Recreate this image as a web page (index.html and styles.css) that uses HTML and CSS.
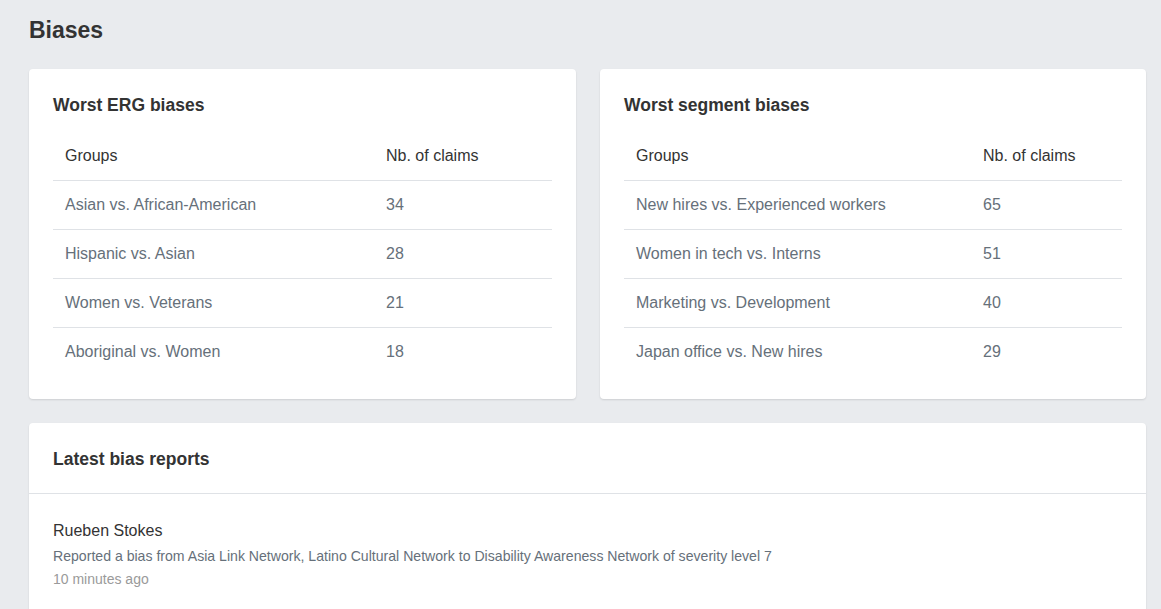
FILE: index.html
```html
<!DOCTYPE html>
<html lang="en">
<head>
<meta charset="utf-8">
<title>Biases</title>
<link rel="stylesheet" href="styles.css">
</head>
<body>
<main class="page">
  <h1 class="page-title">Biases</h1>
  <div class="grid">
    <section class="card card-pad">
      <h2 class="card-title">Worst ERG biases</h2>
      <table class="table">
        <thead>
          <tr><th class="col-erg">Groups</th><th>Nb. of claims</th></tr>
        </thead>
        <tbody>
          <tr><td>Asian vs. African-American</td><td>34</td></tr>
          <tr><td>Hispanic vs. Asian</td><td>28</td></tr>
          <tr><td>Women vs. Veterans</td><td>21</td></tr>
          <tr><td>Aboriginal vs. Women</td><td>18</td></tr>
        </tbody>
      </table>
    </section>
    <section class="card card-pad">
      <h2 class="card-title">Worst segment biases</h2>
      <table class="table">
        <thead>
          <tr><th class="col-seg">Groups</th><th>Nb. of claims</th></tr>
        </thead>
        <tbody>
          <tr><td>New hires vs. Experienced workers</td><td>65</td></tr>
          <tr><td>Women in tech vs. Interns</td><td>51</td></tr>
          <tr><td>Marketing vs. Development</td><td>40</td></tr>
          <tr><td>Japan office vs. New hires</td><td>29</td></tr>
        </tbody>
      </table>
    </section>
  </div>
  <section class="card reports">
    <header class="card-header">
      <h2 class="card-title flush">Latest bias reports</h2>
    </header>
    <div class="card-body">
      <div class="report-name">Rueben Stokes</div>
      <div class="report-desc">Reported a bias from Asia Link Network, Latino Cultural Network to Disability Awareness Network of severity level 7</div>
      <div class="report-time">10 minutes ago</div>
    </div>
  </section>
</main>
</body>
</html>
```

FILE: styles.css
```css
* { box-sizing: border-box; }
html, body { margin: 0; padding: 0; }
body {
  background: #e9ebee;
  font-family: "Liberation Sans", Arial, Helvetica, sans-serif;
  color: #333;
  font-size: 16px;
  line-height: 1.5;
  height: 609px;
  overflow: hidden;
}
.page {
  padding: 13px 15px 0 29px;
}
.page-title {
  margin: 0 0 22px 0;
  font-size: 23px;
  font-weight: bold;
  line-height: 34px;
  color: #333;
}
.grid {
  display: grid;
  grid-template-columns: 547px 546px;
  column-gap: 24px;
  margin-bottom: 24px;
}
.card {
  background: #fff;
  border-radius: 4px;
  box-shadow: 0 1px 2px rgba(0, 0, 0, 0.12);
}
.card-pad {
  padding: 25px 24px 23px;
}
.card-title {
  margin: 0 0 16px 0;
  font-size: 17.5px;
  font-weight: bold;
  line-height: 22px;
  color: #333;
}
.card-title.flush { margin: 0; }
.table {
  width: 100%;
  border-collapse: collapse;
}
.table th, .table td {
  text-align: left;
  padding: 12px;
  line-height: 24px;
  font-size: 16px;
}
.table th {
  font-weight: normal;
  color: #333;
  border-bottom: 1px solid #dfe2e6;
}
.table th.col-erg { width: 321px; }
.table th.col-seg { width: 347px; }
.table td {
  color: #66707a;
}
.table tbody tr + tr td {
  border-top: 1px solid #dfe2e6;
}
.reports {
  width: 1117px;
}
.card-header {
  padding: 25px 24px 23px;
  border-bottom: 1px solid #dfe2e6;
}
.card-body {
  padding: 25px 24px 24px;
}
.report-name {
  font-size: 16px;
  line-height: 24px;
  color: #333;
}
.report-desc {
  margin-top: 2px;
  font-size: 14.1px;
  line-height: 22px;
  color: #66707a;
}
.report-time {
  font-size: 14px;
  line-height: 24px;
  color: #9a9a9a;
}
```
